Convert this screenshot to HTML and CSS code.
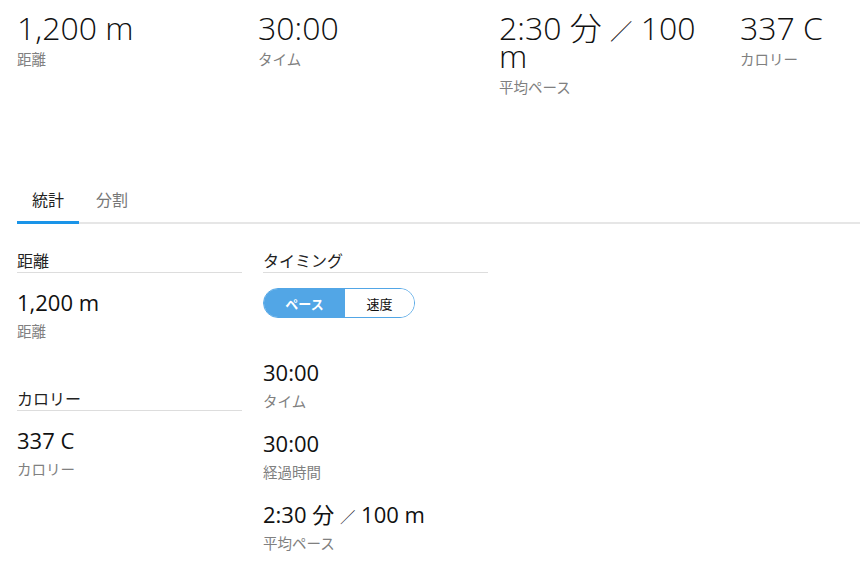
FILE: index.html
```html
<!DOCTYPE html>
<html lang="ja">
  <head>
    <meta charset="UTF-8" />
    <meta name="viewport" content="width=device-width, initial-scale=1.0" />
    <title>アクティビティ</title>
    <link rel="stylesheet" href="styles.css">
  </head>
  <body>
    <div class="page">
      <div class="summary">
        <div class="summary-item">
          <div class="summary-value">1,200 m</div>
          <div class="summary-label">距離</div>
        </div>
        <div class="summary-item">
          <div class="summary-value">30:00</div>
          <div class="summary-label">タイム</div>
        </div>
        <div class="summary-item">
          <div class="summary-value">2:30 分 <span class="sep">／</span> 100 m</div>
          <div class="summary-label">平均ペース</div>
        </div>
        <div class="summary-item">
          <div class="summary-value">337 C</div>
          <div class="summary-label">カロリー</div>
        </div>
      </div>

      <div class="tabs">
        <a class="tab active" href="#">統計</a>
        <a class="tab" href="#">分割</a>
      </div>

      <div class="details">
        <div class="detail-col">
          <section class="stat-group">
            <h3 class="group-title">距離</h3>
            <div class="stat">
              <div class="stat-value">1,200 m</div>
              <div class="stat-label">距離</div>
            </div>
          </section>
          <section class="stat-group">
            <h3 class="group-title">カロリー</h3>
            <div class="stat">
              <div class="stat-value">337 C</div>
              <div class="stat-label">カロリー</div>
            </div>
          </section>
        </div>

        <div class="detail-col">
          <section class="stat-group">
            <h3 class="group-title">タイミング</h3>
            <div class="toggle">
              <button class="toggle-btn pace active">ペース</button>
              <button class="toggle-btn speed">速度</button>
            </div>
            <div class="stat">
              <div class="stat-value">30:00</div>
              <div class="stat-label">タイム</div>
            </div>
            <div class="stat">
              <div class="stat-value">30:00</div>
              <div class="stat-label">経過時間</div>
            </div>
            <div class="stat">
              <div class="stat-value">2:30 分 <span class="sep">／</span> 100 m</div>
              <div class="stat-label">平均ペース</div>
            </div>
          </section>
        </div>
      </div>
    </div>
  </body>
</html>
```

FILE: styles.css
```css
* {
  box-sizing: border-box;
}

body {
  margin: 0;
  font-family: "Open Sans", "Noto Sans CJK JP", sans-serif;
  color: #222;
  background: #fff;
  overflow: hidden;
}

.page {
  padding: 15px 0 0 17px;
}

/* narrower slash between "分" and "100 m" */
.sep {
  font-size: 0.7em;
  line-height: 1;
}

/* top summary */
.summary {
  display: grid;
  grid-template-columns: 241px 241px 241px 1fr;
}
.summary-item {
  padding-right: 20px;
}
.summary-value {
  font-size: 32px;
  font-weight: 300;
  line-height: 26px;
  color: #111;
}
.summary-label {
  margin-top: 10px;
  font-size: 14.5px;
  line-height: 18px;
  color: #808080;
}

/* tabs */
.tabs {
  display: flex;
  gap: 2px;
  margin-top: 84px;
  border-bottom: 2px solid #e6e6e6;
}
.tab {
  padding: 8px 15px 10px;
  margin-bottom: -2px;
  font-size: 16px;
  line-height: 22px;
  color: #777;
  text-decoration: none;
  border-bottom: 3px solid transparent;
}
.tab.active {
  color: #222;
  border-bottom-color: #1a94e8;
}

/* detail columns */
.details {
  display: grid;
  grid-template-columns: 225px 225px;
  column-gap: 21px;
  margin-top: 26px;
}
.stat-group + .stat-group {
  margin-top: 47px;
}
.group-title {
  margin: 0 0 15px;
  font-size: 16px;
  font-weight: 400;
  line-height: 22px;
  color: #222;
  border-bottom: 1px solid #ddd;
}
.stat + .stat {
  margin-top: 18px;
}
.stat-value {
  font-size: 22px;
  line-height: 28px;
  color: #111;
}
.stat-label {
  margin-top: 7px;
  font-size: 14.5px;
  line-height: 18px;
  color: #808080;
}

/* pace / speed switch */
.toggle {
  display: flex;
  width: 152px;
  height: 30px;
  margin-bottom: 40px;
  border: 1px solid #52a6e6;
  border-radius: 15px;
  overflow: hidden;
}
.toggle-btn {
  border: 0;
  padding: 0;
  background: #fff;
  font-family: inherit;
  font-size: 13px;
  font-weight: 400;
  color: #111;
  cursor: pointer;
}
.toggle-btn.pace {
  width: 81px;
}
.toggle-btn.speed {
  flex: 1;
}
.toggle-btn.active {
  background: #52a6e6;
  color: #fff;
  font-weight: 700;
}
```
